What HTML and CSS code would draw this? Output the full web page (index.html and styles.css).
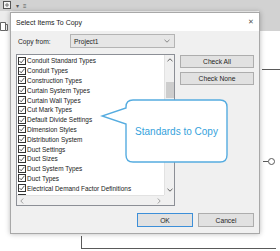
FILE: index.html
```html
<!DOCTYPE html>
<html lang="en">
<head>
  <meta charset="UTF-8">
  <meta name="viewport" content="width=device-width, initial-scale=1.0">
  <title>Select Items To Copy</title>
<link rel="stylesheet" href="styles.css">
</head>
<body>
  <div class="app">
    <div class="ribbon">
      <svg class="qa-icon" width="9" height="9" viewBox="0 0 9 9"><rect x="0.5" y="0.5" width="7" height="7" fill="#f4f4f4" stroke="#555"/><path d="M2 4h4M4 2v4" stroke="#777"/></svg>
      <span class="qa-glyph">&#9662;</span>
      <span class="qa-glyph">&#8801;</span>
    </div>
    <div class="side-strip">
      <svg width="8" height="9" viewBox="0 0 8 9"><path d="M0.5 0.5h5v8h-5z" fill="#fff" stroke="#666"/><path d="M5.5 2.5h2v6h-2" fill="none" stroke="#666"/></svg>
    </div>
    <div class="ribbon-right"></div>
    <div class="drawing line-top"></div>
    <div class="drawing line-stub"></div>
    <div class="drawing node"></div>
    <div class="drawing line-down"></div>
    <div class="drawing line-bottom"></div>
  </div>

  <div class="dialog">
    <div class="titlebar">
      <span class="title">Select Items To Copy</span>
      <span class="close">&#10005;</span>
    </div>
    <div class="dialog-body">
      <div class="copy-row">
        <span class="copy-label">Copy from:</span>
        <div class="combo">
          <span>Project1</span>
          <svg width="6" height="4" viewBox="0 0 6 4"><path d="M0.5 0.8l2.5 2.4 2.5-2.4" fill="none" stroke="#888"/></svg>
        </div>
      </div>

      <div class="main-row">
        <div class="listbox">
          <ul class="items">
            <li><span class="box"></span>Conduit Standard Types</li>
            <li><span class="box"></span>Conduit Types</li>
            <li><span class="box"></span>Construction Types</li>
            <li><span class="box"></span>Curtain System Types</li>
            <li><span class="box"></span>Curtain Wall Types</li>
            <li><span class="box"></span>Cut Mark Types</li>
            <li><span class="box"></span>Default Divide Settings</li>
            <li><span class="box"></span>Dimension Styles</li>
            <li><span class="box"></span>Distribution System</li>
            <li><span class="box"></span>Duct Settings</li>
            <li><span class="box"></span>Duct Sizes</li>
            <li><span class="box"></span>Duct System Types</li>
            <li><span class="box"></span>Duct Types</li>
            <li><span class="box"></span>Electrical Demand Factor Definitions</li>
            <li><span class="box"></span>Electrical Load Classifications</li>
          </ul>
          <div class="vscroll">
            <span class="arrow"><svg width="6" height="4" viewBox="0 0 6 4"><path d="M0.5 3.2l2.5-2.4 2.5 2.4" fill="none" stroke="#606060"/></svg></span>
            <div class="track"><div class="thumb"></div></div>
            <span class="arrow"><svg width="6" height="4" viewBox="0 0 6 4"><path d="M0.5 0.8l2.5 2.4 2.5-2.4" fill="none" stroke="#606060"/></svg></span>
          </div>
          <div class="hscroll">
            <span class="arrow"><svg width="4" height="6" viewBox="0 0 4 6"><path d="M3.2 0.5l-2.4 2.5 2.4 2.5" fill="none" stroke="#a0a0a0"/></svg></span>
            <span class="arrow"><svg width="4" height="6" viewBox="0 0 4 6"><path d="M0.8 0.5l2.4 2.5-2.4 2.5" fill="none" stroke="#a0a0a0"/></svg></span>
          </div>
          <div class="corner"></div>
        </div>
        <div class="side-buttons">
          <button class="btn">Check All</button>
          <button class="btn">Check None</button>
        </div>
      </div>

      <div class="footer">
        <button class="btn btn-default">OK</button>
        <button class="btn">Cancel</button>
      </div>
    </div>
  </div>

  <div class="callout">
    <svg class="callout-shape" width="130" height="66" viewBox="0 0 130 66">
      <path d="M33 1H120Q127 1 127 8V56Q127 63 120 63H33Q26 63 26 56V25L2 17L26 9V8Q26 1 33 1Z" fill="#fff" stroke="#55ace0" stroke-width="1.4"/>
    </svg>
    <div class="callout-text">Standards to Copy</div>
  </div>
</body>
</html>
```

FILE: styles.css
```css
body {
  margin: 0;
  padding: 0;
  width: 280px;
  height: 251px;
  overflow: hidden;
  background-color: #fff;
  font-family: "Liberation Sans", Arial, sans-serif;
  color: #1e1e1e;
  position: relative;
}

/* background application */
.ribbon {
  height: 11px;
  background-color: #d2d2d2;
  display: flex;
  align-items: center;
  gap: 4px;
  padding-left: 3px;
}

.qa-glyph {
  font-size: 6px;
  color: #555;
}

.side-strip {
  width: 10px;
  height: 20px;
  background-color: #ececec;
  padding-top: 6px;
  box-sizing: border-box;
}

.ribbon-right {
  position: absolute;
  left: 259px;
  top: 0;
  width: 21px;
  height: 31px;
  background-color: #d2d2d2;
}

.drawing {
  position: absolute;
  background-color: #5a5a5a;
}

.line-top {
  left: 262px;
  top: 69px;
  width: 18px;
  height: 1px;
}

.line-stub {
  left: 263px;
  top: 161px;
  width: 5px;
  height: 1px;
}

.node {
  left: 268px;
  top: 158px;
  width: 5px;
  height: 5px;
  border: 1px solid #5a5a5a;
  border-radius: 50%;
  background-color: #fff;
}

.line-down {
  left: 81px;
  top: 236px;
  width: 1px;
  height: 13px;
}

.line-bottom {
  left: 81px;
  top: 248px;
  width: 195px;
  height: 1px;
}

/* dialog */
.dialog {
  position: absolute;
  left: 10px;
  top: 12px;
  width: 250px;
  height: 222px;
  box-sizing: border-box;
  border: 1px solid #a8a8a8;
  background-color: #f0f0f0;
  box-shadow: 0 0 5px rgba(0, 0, 0, 0.28);
  display: flex;
  flex-direction: column;
}

.titlebar {
  height: 18px;
  background-color: #fff;
  display: flex;
  align-items: center;
  justify-content: space-between;
  padding: 0 5px 0 5px;
}

.title {
  font-size: 7px;
  color: #222;
}

.close {
  font-size: 7px;
  color: #555;
}

.dialog-body {
  flex: 1;
  padding: 3px 5px 5px 5px;
  display: flex;
  flex-direction: column;
}

.copy-row {
  display: flex;
  align-items: center;
  height: 14px;
}

.copy-label {
  width: 52px;
  padding-left: 2px;
  font-size: 6.7px;
}

.combo {
  width: 105px;
  height: 14px;
  box-sizing: border-box;
  border: 1px solid #b4b4b4;
  background-color: #e6e6e6;
  display: flex;
  align-items: center;
  justify-content: space-between;
  padding: 0 4px 0 3px;
  font-size: 6.7px;
}

.main-row {
  display: flex;
  gap: 5px;
  margin-top: 6px;
}

.listbox {
  width: 159px;
  height: 152px;
  box-sizing: border-box;
  border: 1px solid #8c8f96;
  background-color: #fff;
  display: grid;
  grid-template-columns: 1fr 10px;
  grid-template-rows: 1fr 10px;
}

.items {
  list-style: none;
  margin: 0;
  padding: 1px 0 0 1px;
  overflow: hidden;
  font-size: 6.45px;
  color: #1a1a1a;
}

.items li {
  height: 9.8px;
  display: flex;
  align-items: center;
  white-space: nowrap;
}

.box {
  width: 8px;
  height: 8px;
  box-sizing: border-box;
  border: 1px solid #333;
  margin-right: 1px;
  flex-shrink: 0;
  background: #fff url("data:image/svg+xml,%3Csvg xmlns='http://www.w3.org/2000/svg' viewBox='0 0 6 6'%3E%3Cpath d='M0.6 3.1l1.6 1.7 3.2-4' fill='none' stroke='%23333' stroke-width='0.8'/%3E%3C/svg%3E") center / 6px 6px no-repeat;
}

.vscroll {
  background-color: #f0f0f0;
  border-left: 1px solid #e2e2e2;
  display: flex;
  flex-direction: column;
}

.vscroll .arrow {
  height: 10px;
  display: flex;
  align-items: center;
  justify-content: center;
}

.track {
  flex: 1;
  padding-top: 17px;
}

.thumb {
  width: 8px;
  height: 16px;
  margin: 0 auto;
  background-color: #cdcdcd;
}

.hscroll {
  background-color: #f0f0f0;
  border-top: 1px solid #e2e2e2;
  display: flex;
  justify-content: space-between;
}

.hscroll .arrow {
  width: 10px;
  display: flex;
  align-items: center;
  justify-content: center;
}

.corner {
  background-color: #f0f0f0;
}

.side-buttons {
  flex: 1;
  display: flex;
  flex-direction: column;
  gap: 4px;
  padding-top: 1px;
}

.btn {
  height: 13px;
  box-sizing: border-box;
  border: 1px solid #adadad;
  background-color: #e1e1e1;
  font-family: "Liberation Sans", Arial, sans-serif;
  font-size: 6.7px;
  color: #1e1e1e;
  padding: 0;
}

.footer {
  display: flex;
  justify-content: flex-end;
  gap: 5px;
  margin-top: 7px;
}

.footer .btn {
  width: 56px;
  height: 14px;
}

.btn-default {
  border-color: #3d8fd8;
}

/* callout */
.callout {
  position: absolute;
  left: 100px;
  top: 99px;
  width: 130px;
  height: 66px;
}

.callout-shape {
  display: block;
}

.callout-text {
  position: absolute;
  left: 26px;
  top: 1px;
  width: 101px;
  height: 62px;
  display: flex;
  align-items: center;
  justify-content: center;
  font-size: 10px;
  color: #35a2dc;
}
```
